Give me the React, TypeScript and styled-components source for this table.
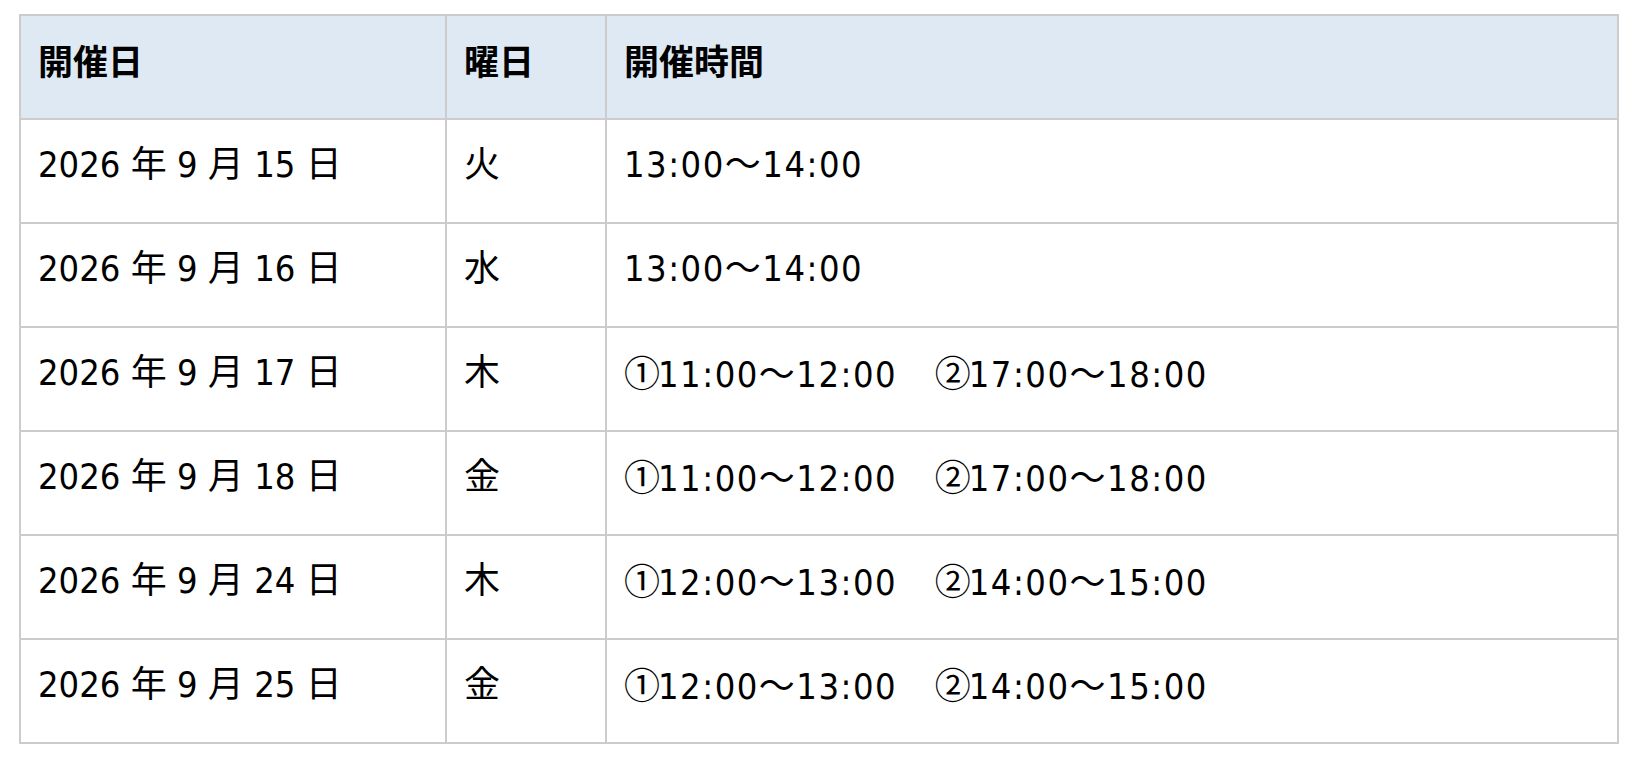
import styled, { createGlobalStyle } from 'styled-components';

const GlobalStyle = createGlobalStyle`
  body {
    margin: 0;
    background: #fff;
    font-family: "DejaVu Sans Condensed", "DejaVu Sans", "Noto Sans CJK JP", sans-serif;
    font-stretch: semi-condensed;
    color: #000;
  }
`;

interface Slot {
  mark?: string;
  time: string;
}

interface Row {
  date: string;
  day: string;
  slots: Slot[];
}

const ROWS: Row[] = [
  { date: '2026 年 9 月 15 日', day: '火', slots: [{ time: '13:00～14:00' }] },
  { date: '2026 年 9 月 16 日', day: '水', slots: [{ time: '13:00～14:00' }] },
  {
    date: '2026 年 9 月 17 日',
    day: '木',
    slots: [
      { mark: '①', time: '11:00～12:00' },
      { mark: '②', time: '17:00～18:00' },
    ],
  },
  {
    date: '2026 年 9 月 18 日',
    day: '金',
    slots: [
      { mark: '①', time: '11:00～12:00' },
      { mark: '②', time: '17:00～18:00' },
    ],
  },
  {
    date: '2026 年 9 月 24 日',
    day: '木',
    slots: [
      { mark: '①', time: '12:00～13:00' },
      { mark: '②', time: '14:00～15:00' },
    ],
  },
  {
    date: '2026 年 9 月 25 日',
    day: '金',
    slots: [
      { mark: '①', time: '12:00～13:00' },
      { mark: '②', time: '14:00～15:00' },
    ],
  },
];

const App = () => {
  return (
    <Page>
      <GlobalStyle />
      <Table>
        <thead>
          <tr>
            <Head $width={390}>開催日</Head>
            <Head $width={124}>曜日</Head>
            <Head>開催時間</Head>
          </tr>
        </thead>
        <tbody>
          {ROWS.map((row, i) => (
            <tr key={i}>
              <Cell>{row.date}</Cell>
              <Cell>{row.day}</Cell>
              <Cell $spaced>
                {row.slots.map((slot, j) => (
                  <span key={j}>
                    {j > 0 && '　'}
                    {slot.mark && <Mark>{slot.mark}</Mark>}
                    {slot.time}
                  </span>
                ))}
              </Cell>
            </tr>
          ))}
        </tbody>
      </Table>
    </Page>
  );
};

export default App;

const Page = styled.div`
  padding: 14px 0 0 19px;
`;

const Table = styled.table`
  width: 1600px;
  border-collapse: collapse;
  table-layout: fixed;
`;

const Head = styled.th<{ $width?: number }>`
  width: ${(p) => (p.$width ? `${p.$width}px` : 'auto')};
  height: 87px;
  padding: 0 17px 15px;
  background: #dfe9f4;
  border: 2px solid #cccccc;
  text-align: left;
  font-family: "Noto Sans CJK JP", sans-serif;
  font-size: 35px;
  font-weight: 700;
  line-height: 1.2;
`;

const Cell = styled.td<{ $spaced?: boolean }>`
  height: 90px;
  padding: 0 17px 12px;
  border: 2px solid #cccccc;
  font-size: 36px;
  font-weight: 400;
  line-height: 1.2;
  letter-spacing: ${(p) => (p.$spaced ? '1.5px' : '0')};
  white-space: pre;
`;

const Mark = styled.span`
  font-family: "Noto Sans CJK JP", sans-serif;
  font-size: 36px;
  letter-spacing: -2px;
`;
